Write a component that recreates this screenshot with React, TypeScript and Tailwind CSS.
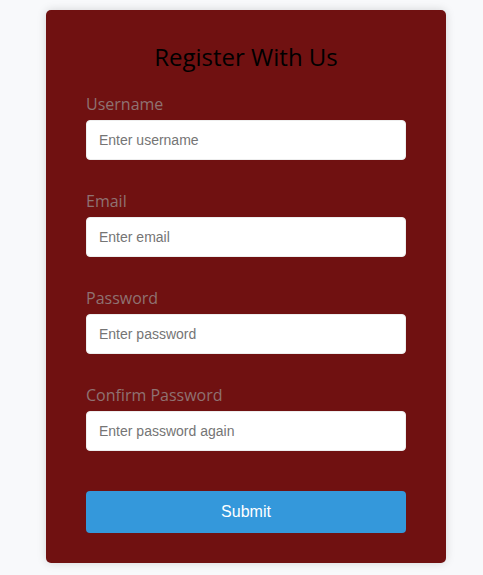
import React from "react";

const fields = [
  { label: "Username", type: "text", placeholder: "Enter username" },
  { label: "Email", type: "email", placeholder: "Enter email" },
  { label: "Password", type: "password", placeholder: "Enter password" },
  { label: "Confirm Password", type: "password", placeholder: "Enter password again" },
];

export default function App() {
  return (
    <div className="min-h-[575px] w-full bg-[#f8f9fb] pt-[10px]">
      <div className="ml-[46px] w-[400px] rounded-[5px] bg-[#701111] px-[40px] pt-[29px] pb-[30px] shadow-[0_0_10px_rgba(0,0,0,0.15)]">
        <h2 className="mb-[17px] text-center font-['Open_Sans',sans-serif] text-[24px] font-medium leading-[36px] text-black">
          Register With Us
        </h2>
        <form onSubmit={(e) => e.preventDefault()} className="flex flex-col">
          {fields.map((f) => (
            <div key={f.label} className="mb-[29px] flex flex-col gap-[4px]">
              <label className="font-['Open_Sans',sans-serif] text-[16px] leading-[24px] text-[#8f7272]">
                {f.label}
              </label>
              <input
                type={f.type}
                placeholder={f.placeholder}
                className="h-[40px] w-full rounded-[4px] border border-[#eee] bg-white px-[12px] font-['Liberation_Sans',Arial,sans-serif] text-[14px] text-[#333] outline-none placeholder:text-[#757575]"
              />
            </div>
          ))}
          <button
            type="submit"
            className="mt-[11px] h-[42px] w-full rounded-[4px] bg-[#3498db] font-['Liberation_Sans',Arial,sans-serif] text-[16px] text-white"
          >
            Submit
          </button>
        </form>
      </div>
    </div>
  );
}
